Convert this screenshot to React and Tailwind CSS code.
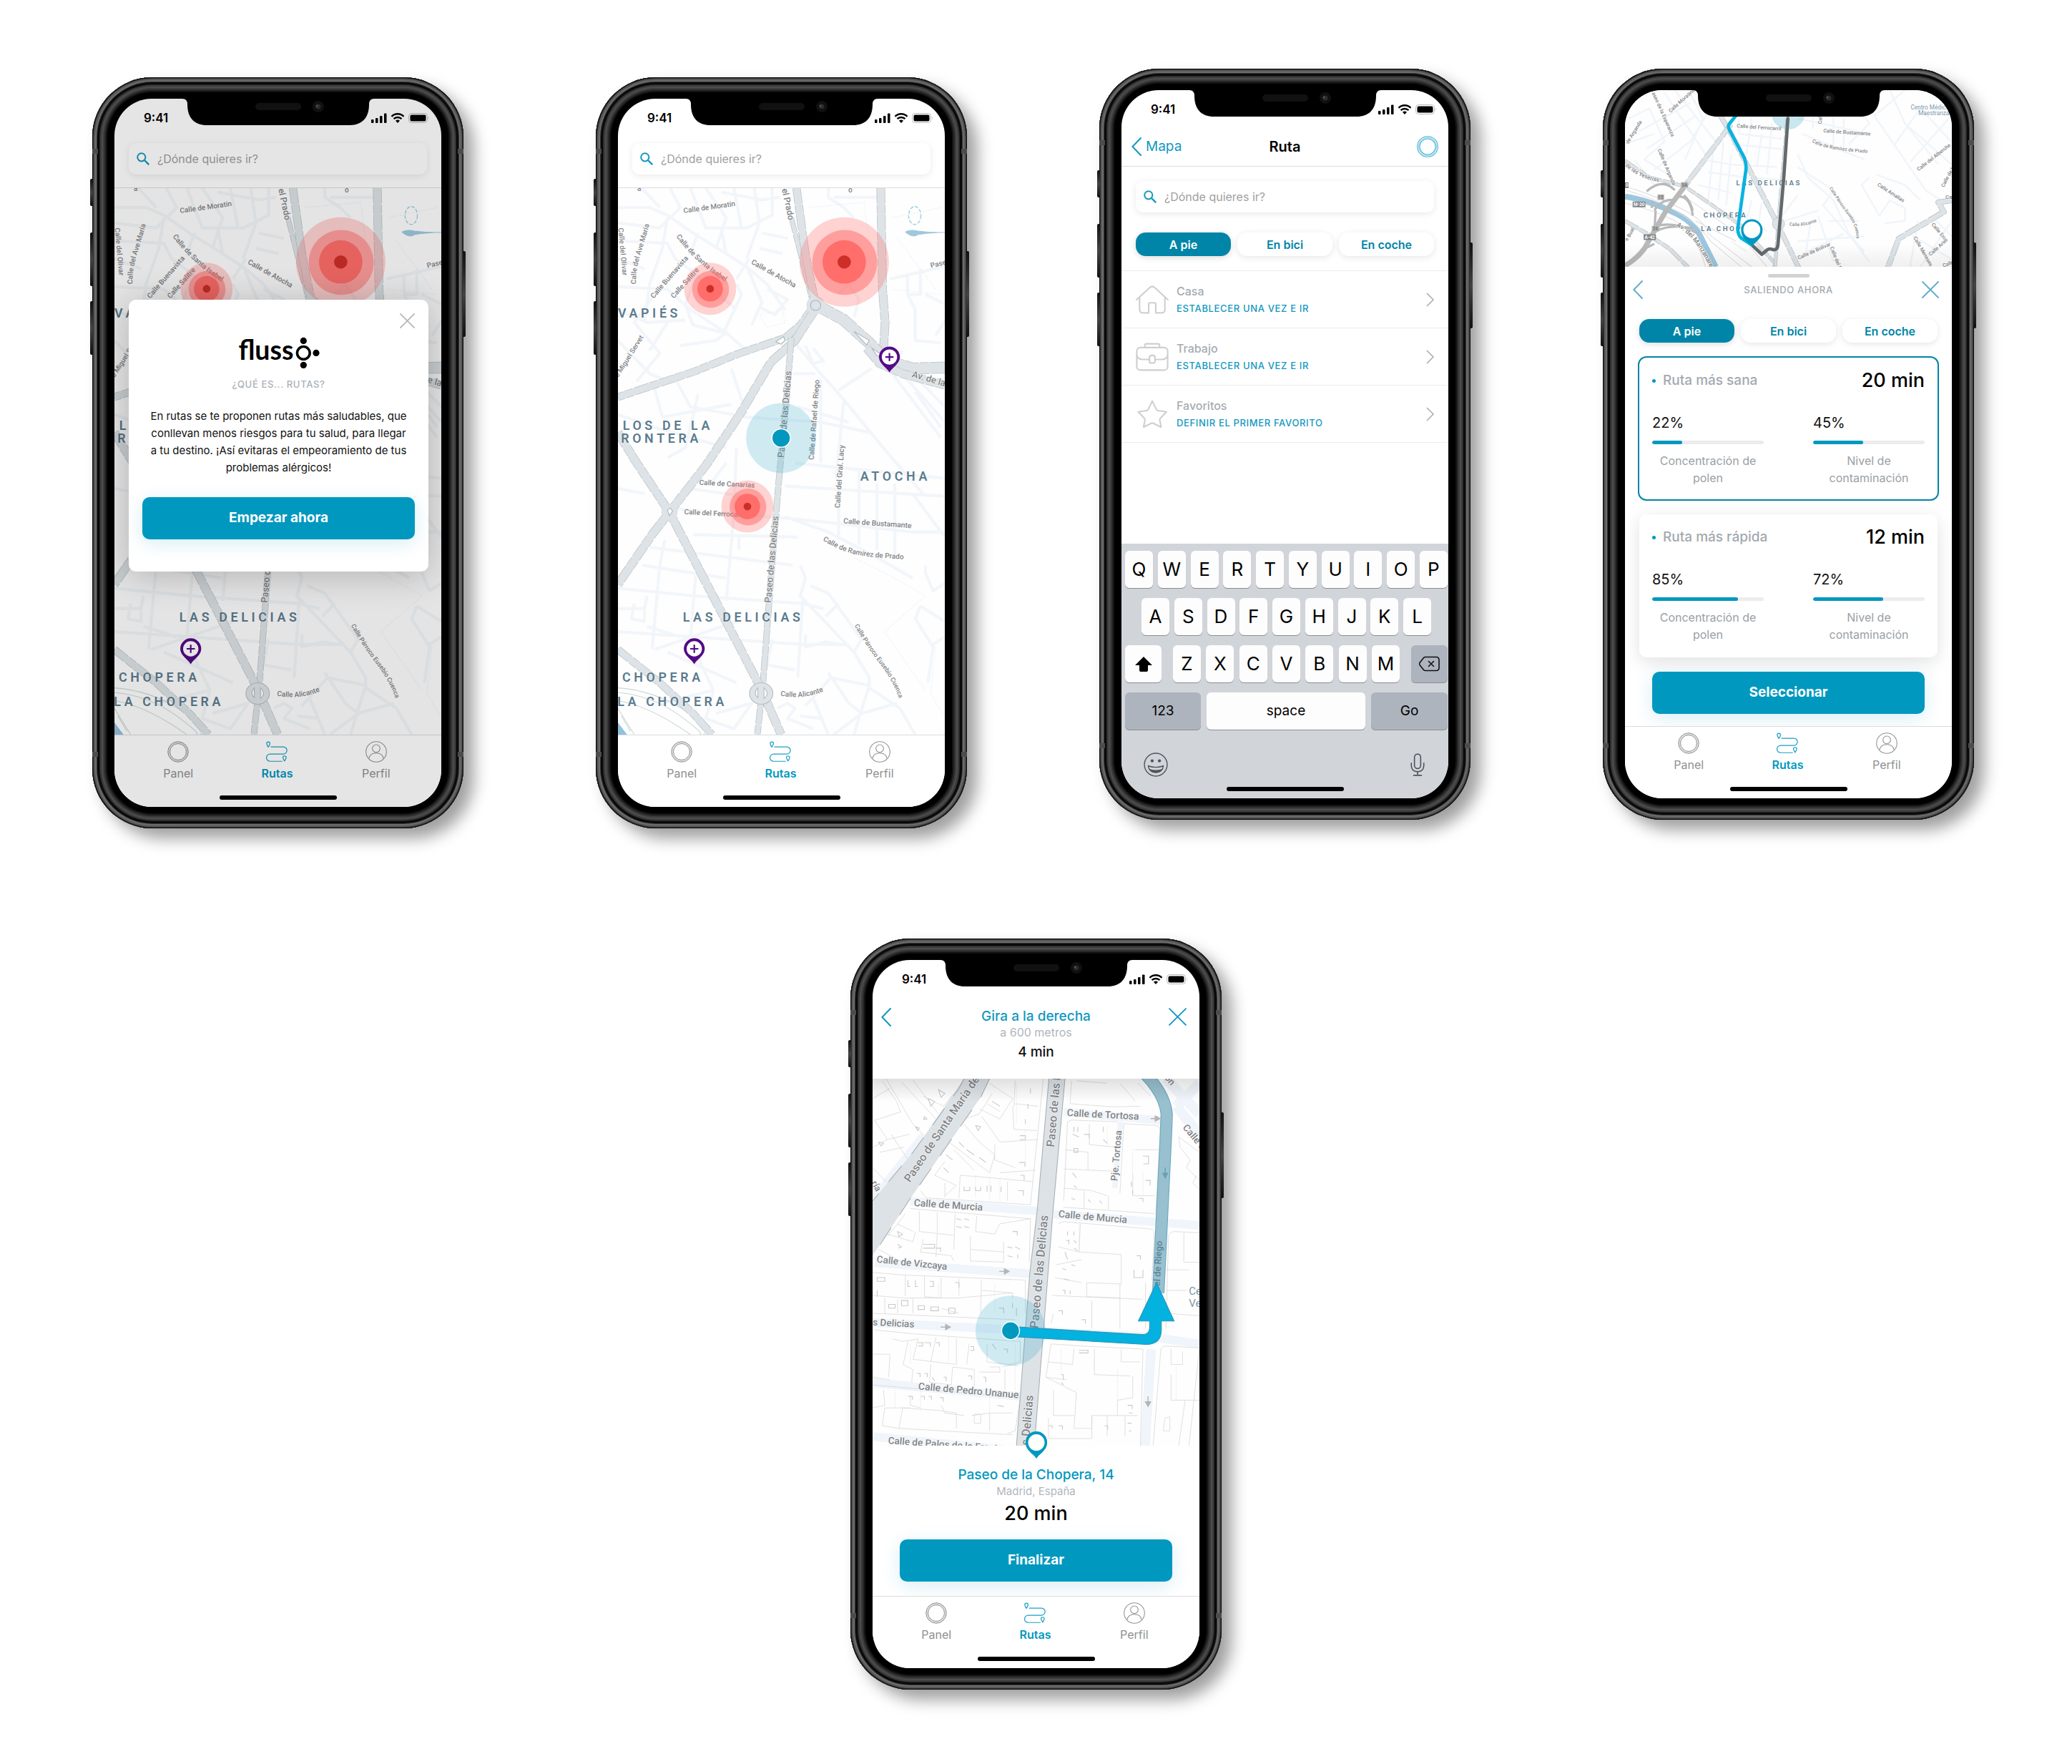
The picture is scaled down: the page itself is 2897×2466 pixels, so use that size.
import React from "react";

const PEDESTRIAN_MODES = ["A pie", "En bici", "En coche"];

/* ---------- icons ---------- */

function SearchIcon() {
  return (
    <svg viewBox="0 0 18 18" className="h-[18px] w-[18px] shrink-0" fill="none" stroke="#1398bf" strokeWidth="2">
      <circle cx="6.8" cy="6.8" r="5.6" />
      <path d="M11 11l6.2 6.2" strokeWidth="2.4" />
    </svg>
  );
}

function BackChevron() {
  return (
    <svg viewBox="0 0 14 26" className="h-[26px] w-[14px]" fill="none" stroke="currentColor" strokeWidth="2" strokeLinecap="round">
      <path d="M13 1L1.4 13L13 25" />
    </svg>
  );
}

function CloseIcon({ className = "" }) {
  return (
    <svg viewBox="0 0 24 24" className={className} fill="none" stroke="currentColor" strokeWidth="1.8" strokeLinecap="round">
      <path d="M1 1l22 22M23 1L1 23" />
    </svg>
  );
}

function RingIcon({ blue }) {
  return blue ? (
    <svg viewBox="0 0 84 84" className="h-[30px] w-[30px]" fill="none" stroke="#3db0d2" strokeWidth="3">
      <circle cx="42" cy="42" r="40" />
      <circle cx="42" cy="42" r="35.5" stroke="#7fcbe1" strokeWidth="2.5" />
      <circle cx="42" cy="42" r="31" />
    </svg>
  ) : (
    <svg viewBox="0 0 84 84" className="h-[30px] w-[30px]" fill="none" stroke="#959595" strokeWidth="2.8">
      <circle cx="42" cy="42" r="36" stroke="#dcdcdc" strokeWidth="7" />
      <circle cx="42" cy="42" r="40" />
      <circle cx="42" cy="42" r="32" />
    </svg>
  );
}

function RouteIcon() {
  return (
    <svg viewBox="0 0 86 84" className="h-[30px] w-[30px]" fill="none" stroke="#1a9fc4" strokeWidth="3.5" strokeLinecap="round" strokeLinejoin="round">
      <path d="M20 22H69a14.5 14.5 0 0 1 0 29H16a14 14 0 0 0 0 29H64" />
      <path d="M9 23C5 17 2.500 13 2.500 9a6.500 6.500 0 0 1 13 0C15.500 13 13 17 9 23z" />
      <path d="M74 79C70 73 67.500 69 67.500 65a6.500 6.500 0 0 1 13 0C80.500 69 78 73 74 79z" />
    </svg>
  );
}

function ProfileIcon() {
  return (
    <svg viewBox="0 0 84 84" className="h-[30px] w-[30px]" fill="none" stroke="#949494" strokeWidth="3">
      <circle cx="42" cy="42" r="40" />
      <circle cx="42" cy="29" r="15" />
      <path d="M13 69C16 55 27 47 42 47S68 55 71 69" />
    </svg>
  );
}

function RowIcon({ kind }) {
  return (
    <svg viewBox="0 0 130 112" className="h-[40px] w-[46px]" fill="none" stroke="#cfcfcf" strokeWidth="6" strokeLinecap="round" strokeLinejoin="round">
      {kind === "home" && (
        <path d="M3 56L56 7q9-6 18 0L127 56M15 46V94q0 14 14 14H51V74q0-6 6-6H73q6 0 6 6V108H101q14 0 14-14V46" />
      )}
      {kind === "work" && (
        <>
          <rect x="4" y="19" width="122" height="89" rx="14" />
          <path d="M36 18V10q0-6 6-6H88q6 0 6 6V18M4 50Q8 66 28 66H53M77 66H102Q122 66 126 50" />
          <rect x="54" y="50" width="22" height="30" rx="8" />
        </>
      )}
      {kind === "star" && (
        <path d="M65 4L82 38Q84 42 88 42L121 47L97 72Q94 75 95 80L100 107L69 92Q65 90 61 92L31 107L36 80Q37 75 34 72L10 47L43 42Q47 42 49 38Z" />
      )}
    </svg>
  );
}

function FlussoLogo() {
  return (
    <svg viewBox="0 0 320 130" className="h-[46px] w-[114px]" role="img" aria-label="flusso">
      <text x="0" y="97" fontSize="106" fontWeight="700" fontFamily="Lato, sans-serif" fill="#000">fluss</text>
      <circle cx="257" cy="69" r="25" fill="none" stroke="#000" strokeWidth="10" />
      <circle cx="257" cy="21" r="13" />
      <circle cx="307" cy="69" r="13" />
      <circle cx="257" cy="117" r="13" />
    </svg>
  );
}

/* ---------- map drawing helpers ---------- */

const MAP_FONT = 'Roboto, "Noto Sans", sans-serif';

function Road({ d, w, fill = "#dde3e6", edge = "#b8c1c6" }) {
  return (
    <g fill="none" strokeLinejoin="round">
      <path d={d} stroke={edge} strokeWidth={w} strokeDasharray="60 6 34 4" />
      <path d={d} stroke={fill} strokeWidth={w - 4} />
    </g>
  );
}

function Street({ x, y, r = 0, s = 28, c = "#7f8386", children }) {
  return (
    <text
      transform={`translate(${x} ${y}) rotate(${r})`}
      fontSize={s}
      fontWeight="500"
      fill={c}
      stroke="#fff"
      strokeWidth="3"
      paintOrder="stroke"
    >
      {children}
    </text>
  );
}

function CurvedStreet({ id, d, s = 28, children }) {
  return (
    <>
      <path id={id} d={d} fill="none" />
      <text fontSize={s} fontWeight="500" fill="#7f8386" stroke="#fff" strokeWidth="3" paintOrder="stroke">
        <textPath href={`#${id}`}>{children}</textPath>
      </text>
    </>
  );
}

function District({ x, y, s = 50, gap = 13, children }) {
  return (
    <text x={x} y={y} fontSize={s} fontWeight="600" letterSpacing={gap} fill="#5b7b8e" stroke="#fff" strokeOpacity="0.6" strokeWidth="4" paintOrder="stroke">
      {children}
    </text>
  );
}

function Heat({ x, y, r }) {
  return (
    <g>
      <circle cx={x} cy={y} r={r[0]} fill="#ff6b68" fillOpacity="0.29" />
      <circle cx={x + 2} cy={y + 2} r={r[1]} fill="#ff6b68" fillOpacity="0.5" />
      <circle cx={x} cy={y} r={r[2]} fill="#ff6b66" fillOpacity="0.93" />
      <circle cx={x} cy={y} r={r[3]} fill="#cd2f28" />
    </g>
  );
}

function UserDot({ x, y }) {
  return (
    <g>
      <circle cx={x} cy={y} r="137" fill="#27a2c4" fillOpacity="0.21" />
      <circle cx={x} cy={y} r="36" fill="#0098bf" stroke="#fff" strokeWidth="4" />
    </g>
  );
}

function ClinicPin({ x, y }) {
  return (
    <g transform={`translate(${x} ${y})`}>
      <path d="M0 60C-12 40-41 26-41 0A41 41 0 0 1 41 0C41 26 12 40 0 60z" fill="#540a86" />
      <circle r="30" fill="#fff" />
      <path d="M-16 0H16M0-16V16" stroke="#540a86" strokeWidth="6" />
    </g>
  );
}

/* ---------- city map (screens 1 and 2) ---------- */

function CityMap({ id }) {
  return (
    <svg viewBox="136 484 1280 2139" preserveAspectRatio="xMidYMid slice" className="block h-full w-full" fontFamily={MAP_FONT} role="img" aria-label="Mapa de Madrid">
      <rect x="100" y="460" width="1360" height="2200" fill="#fefefe" />
      <g fill="none" stroke="#f2f6fa" strokeWidth="12" strokeLinejoin="round">
        <path d="M136 560H260L330 590L430 660L560 740L650 800L720 860L790 960M136 620L300 640L380 560L340 484M230 484L300 560M420 484L480 640L640 640L740 590V484" />
        <path d="M480 484L560 600L520 720M540 500L700 530L770 520M590 484L620 640M670 484L690 620L640 760M136 690L330 700L360 760L440 820L600 960M330 600L310 720L260 860L240 1010" />
        <path d="M136 760L240 800M136 870L330 880L420 960L560 1050L640 1120M280 900L200 1010L300 1130L210 1240M136 960L250 1010L400 1000M330 1010L260 1120M440 830L400 940L430 1020L550 1050L620 900L600 860" />
        <path d="M136 1080L260 1210L330 1240M560 1050L520 1080L380 1100M640 790L700 930L660 1020M690 720L780 740M650 760L600 840M700 660L800 680M450 660L420 740L500 800M560 740L540 640M720 880L800 920L750 980L690 950" />
        <path d="M960 484V520L1020 560L1060 600M980 520H1150M1200 840L1420 790M1270 820V900H1320V800M1000 900L1040 860L1080 920L1060 990M1250 1120L1210 1200M1270 900L1300 960V1080L1400 1090M1340 900L1420 940M1380 1060L1420 1000" />
        <path d="M360 1230L420 1340L640 1380L930 1400L1120 1440M280 1270L310 1380L580 1330M136 1370L280 1420L560 1500M580 1190L640 1370M450 1290L400 1500L330 1540M830 1090L930 1210L1010 1300L1200 1530L1330 1680M870 1100L900 1170L940 1160L900 1110M1000 1275L1130 1190M820 1210H910M1020 1320L990 1620M930 1230V1560M840 1340L1040 1400" />
        <path d="M1210 1210L1400 1460M1240 1200L1416 1400M1280 1200L1416 1340M1300 1280L1400 1420" />
        <path d="M136 1660L240 1680M560 1560L500 1640L420 1620M600 1500L590 1760L560 2100M420 1660L700 1700M370 1740L840 1780L930 1790L1290 1830L1416 1830M790 1650L1416 1690M830 1560L1416 1620M1000 1600V1860M1080 1580V1880M1150 1640V1900M1220 1640V1930M790 1770L960 1830L1150 1930L1290 2010M1290 1680L1416 1850" />
        <path d="M430 1840L840 1850M610 1840V1900M320 1860L300 1960L270 2290M260 1890L580 1930L820 1960M136 2050L440 2080L860 2110L940 2130M440 2000L420 2250M230 1960L560 2010M136 2130H240L250 2080M200 2110L190 2170L240 2180V2120M136 2220L860 2270L1030 2270M250 2200L380 2240M280 2290L600 2180M850 1960L870 2010L850 2080L1060 2300L1120 2400V2440L1240 2520L1300 2623" />
        <path d="M890 2040L960 2070L1090 2250L1060 2300M1000 2110L950 2160M860 2090L840 2400M740 2250L720 2350L830 2370M870 2230V2280L950 2260L1010 2270M870 2510L970 2400L1120 2430L1060 2623M960 2380L1040 2500L1090 2540L980 2623M760 2520L800 2500L830 2520L800 2560L900 2600M900 2480L960 2623M1090 2540L1230 2500M510 2450L480 2560L590 2600L660 2500L520 2540M440 2300L510 2450L300 2500M330 2300L600 2420M850 2550L940 2560" />
        <path d="M1320 2120L1416 2180M1320 2120L1300 2170L1370 2280L1350 2420M1340 1960V1990L1370 2060L1416 2030M1370 2270L1416 2240" />
      </g>
      <g fill="none" stroke="#e9f0f6" strokeWidth="3" strokeDasharray="6 5">
        <path d="M1060 1930L1200 2000L1340 2080L1180 2220L1340 2450M1380 2280L1360 2460L1416 2560M880 560L1100 540L1120 700L1200 690M1210 600L1400 560M1230 680L1380 880M1210 880L1400 900M690 980L780 960L790 1010L720 1030z" />
      </g>
      <g fill="none" stroke="#c9d8d6" strokeWidth="3">
        <path d="M136 2440Q280 2450 400 2530T470 2623M136 2458Q270 2470 380 2550T450 2623M136 2490Q260 2510 420 2623M136 2520L200 2623M150 2550L185 2610" />
      </g>
      <path d="M136 2575L172 2623H136z" fill="#92c1dc" />
      <ellipse cx="1298" cy="591" rx="24" ry="35" fill="none" stroke="#a5cde0" strokeWidth="4" strokeDasharray="14 6" />
      <path d="M1262 656Q1280 645 1310 652Q1370 660 1416 657Q1340 660 1310 666Q1290 680 1262 656z" fill="#9ec8de" stroke="#9ec8de" strokeWidth="3" />

      <Road d="M815 600L850 740L895 920" w={20} />
      <Road d="M835 484L870 740L910 940" w={32} />
      <Road d="M1165 484L1172 880L1182 1010L1176 1110" w={34} />
      <Road d="M900 950L850 1020L790 1070L600 1135L440 1200L136 1302" w={30} />
      <Road d="M908 960L830 1080L735 1165L610 1375L480 1570L340 1750L270 1840L136 2035" w={34} />
      <Road d="M815 1070L795 1320L765 1640L735 2010L704 2420L682 2623" w={25} />
      <Road d="M136 1440L200 1545L338 1752L430 1930L695 2440L775 2623" w={34} />
      <Road d="M136 2290L300 2420L430 2540L505 2623" w={30} />
      <Road d="M920 945L1020 1000L1120 1090L1190 1160L1290 1190L1416 1186" w={46} />
      <Road d="M1110 1110L1160 1170L1250 1210L1416 1255" w={34} />
      <circle cx="910" cy="943" r="36" fill="#dde3e6" />
      <circle cx="910" cy="943" r="20" fill="none" stroke="#a9b4ba" strokeWidth="3" />
      <path d="M1060 1045L1120 1080L1110 1098zM1130 1110L1160 1130L1190 1150L1150 1140zM755 1085L785 1065L790 1080L775 1095z" fill="#fff" stroke="#a9b4ba" strokeWidth="3" />
      <circle cx="338" cy="1752" r="32" fill="#dde3e6" />
      <path d="M330 1745L342 1736L350 1748L338 1766z" fill="#fff" stroke="#a9b4ba" strokeWidth="3" />
      <ellipse cx="697" cy="2462" rx="46" ry="42" fill="#dde3e6" stroke="#b3bdc3" strokeWidth="3" />
      <path d="M684 2440Q664 2462 684 2478zM708 2440Q732 2462 708 2482z" fill="#fff" stroke="#b3bdc3" strokeWidth="3" />

      <Street x={212} y={496}>a</Street>
      <Street x={1038} y={500}>o</Street>
      <Street x={394} y={582} r={-8}>Calle de Moratín</Street>
      <CurvedStreet id={`${id}-ave`} d="M207 860Q206 800 226 738T266 600">Calle del Ave María</CurvedStreet>
      <Street x={138} y={640} r={85}>Calle del Olivar</Street>
      <Street x={276} y={917} r={-49}>Calle Buenavista</Street>
      <Street x={355} y={917} r={-48}>Calle Salitre</Street>
      <CurvedStreet id={`${id}-isabel`} d="M364 674Q450 790 590 872">Calle de Santa Isabel</CurvedStreet>
      <Street x={656} y={779} r={29}>Calle de Atocha</Street>
      <Street x={778} y={488} r={78} s={34}>el Prado</Street>
      <Street x={1362} y={797} r={-14}>Paseo</Street>
      <District x={136} y={992}>VAPIÉS</District>
      <Street x={138} y={1226} r={-58} s={27}>e Miguel Servet</Street>
      <District x={155} y={1430}>LOS DE LA</District>
      <District x={148} y={1481}>RONTERA</District>
      <Street x={786} y={1540} r={-85} s={36}>Paseo de las Delicias</Street>
      <Street x={903} y={1548} r={-86} s={29}>Calle de Rafael de Riego</Street>
      <Street x={1005} y={1736} r={-86} s={29}>Calle del Gral. Lacy</Street>
      <Street x={1285} y={1223} r={16} s={36}>Av. de la</Street>
      <Street x={454} y={1645} r={3}>Calle de Canarias</Street>
      <Street x={395} y={1760} r={3}>Calle del Ferrocarril</Street>
      <Street x={735} y={2108} r={-85} s={36}>Paseo de las Delicias</Street>
      <District x={1085} y={1628}>ATOCHA</District>
      <Street x={1018} y={1796} r={4} s={29}>Calle de Bustamante</Street>
      <CurvedStreet id={`${id}-ramirez`} d="M938 1862Q1020 1915 1110 1925T1300 1938">Calle de Ramírez de Prado</CurvedStreet>
      <District x={390} y={2182}>LAS DELICIAS</District>
      <District x={153} y={2415}>CHOPERA</District>
      <District x={134} y={2511}>LA CHOPERA</District>
      <CurvedStreet id={`${id}-parroco`} d="M1062 2196Q1110 2280 1165 2350T1246 2510" s={25}>Calle Párroco Eusebio Cuenca</CurvedStreet>
      <CurvedStreet id={`${id}-alicante`} d="M772 2470Q880 2490 965 2440">Calle Alicante</CurvedStreet>

      <Heat x={1022} y={773} r={[175, 127, 85, 26]} />
      <Heat x={497} y={878} r={[102, 72, 50, 15]} />
      <Heat x={643} y={1730} r={[102, 72, 50, 15]} />
      <UserDot x={775} y={1462} />
      <ClinicPin x={1199} y={1145} />
      <ClinicPin x={435} y={2287} />
    </svg>
  );
}

/* ---------- route overview map (screen 4) ---------- */

function Badge({ x, y, w, children, dark }) {
  return (
    <g>
      <rect x={x} y={y} width={w} height="22" fill={dark ? "#808486" : "#b4b4b4"} />
      <text x={x + w / 2} y={y + 18} fontSize="18" fontWeight="700" textAnchor="middle" fill={dark ? "#fff" : "#777"}>{children}</text>
    </g>
  );
}

function OverviewMap() {
  return (
    <svg viewBox="145 129 1278 691" preserveAspectRatio="xMidYMid slice" className="block h-full w-full" fontFamily={MAP_FONT} role="img" aria-label="Mapa de las rutas">
      <defs>
        <linearGradient id="ov-fade" x1="0" y1="0" x2="0" y2="1">
          <stop offset="0" stopColor="#000" stopOpacity="0" />
          <stop offset="1" stopColor="#000" stopOpacity="0.06" />
        </linearGradient>
      </defs>
      <rect x="100" y="100" width="1400" height="760" fill="#fefefe" />
      <g fill="none" stroke="#f0f5fa" strokeWidth="7" strokeLinejoin="round">
        <path d="M160 240L240 200L300 330L220 400L330 470M200 290L400 180M230 360L420 230M300 140L460 380M340 129L500 330M400 140L450 240L380 400M260 440L400 330L480 200L440 129M145 340L260 300M180 400L260 500" />
        <path d="M450 400L560 420L740 430M470 450L620 470L760 480M430 500L560 530M530 330L510 560M490 360L470 560M560 380L540 580M590 240V300L760 320M640 240L620 380M680 300L660 430M720 260L700 460M560 340L760 360M840 300L980 360L1080 400M820 240L1100 300M880 200V280M960 160V350M1000 240V360M1060 200L1100 260L1020 340M820 380L860 470L960 560L1020 690L1080 760" />
        <path d="M820 430L960 520L920 580L1040 720L1100 800M820 540L760 620M770 640L900 600M870 650L850 780M900 620L960 800M1000 690L860 760M1080 700L820 720M940 640L1060 640M1080 129L1120 230L1320 520M1180 129L1240 260L1370 420M1120 230L1240 129M1200 340L1300 200L1420 330M1260 410L1420 230M1240 260L1423 420M1100 470L1070 500L1140 620L1180 560L1240 590V640L1160 650M1300 560L1240 500L1130 460M1320 520L1380 560M1240 680L1420 790M1290 640L1260 820M1340 620L1423 700M1300 820L1423 640M640 560L620 640M680 570L660 700M700 680L600 600M560 720L620 760" />
      </g>
      <path d="M145 545Q240 560 330 605Q410 640 440 700L500 820" fill="none" stroke="#9cc6dd" strokeWidth="22" />
      <g fill="none" stroke="#dedede" strokeWidth="3">
        <path d="M145 505Q260 540 360 590T470 690L640 820M145 520Q260 550 350 605T480 720L600 820M145 570Q260 600 340 640T460 820M400 560L600 700L700 820M420 640L580 720" />
      </g>
      <Road d="M515 225L560 300L740 650L825 825" w={20} />
      <Road d="M560 262L378 505" w={20} />
      <Road d="M145 405L240 470L378 505L480 575L600 660L730 805V825" w={14} />
      <Road d="M780 240L745 640L732 825" w={14} />
      <Road d="M145 640L230 690L320 750L395 825" w={16} />
      <Road d="M1423 560L1370 568L1392 605L1215 710L1172 825" w={22} />
      <circle cx="745" cy="652" r="24" fill="#dde3e6" stroke="#b3bdc3" strokeWidth="2" />
      <g fill="none" stroke="#b9b9b9">
        <path d="M375 510L300 610L220 750Q190 790 145 815" strokeWidth="20" />
        <path d="M350 545Q400 540 410 620M375 540Q400 560 410 600M345 560Q290 550 260 600M265 600L260 680M270 660Q340 640 430 690M265 680Q330 650 410 670M230 525Q290 470 340 520M250 560V590M220 750L260 730" strokeWidth="9" />
      </g>
      <Street x={250} y={140} r={66} s={20}>aseo de la Esperanza</Street>
      <Street x={323} y={218} r={-42} s={20}>Calle Moratines</Street>
      <Street x={158} y={340} r={-58} s={20}>de Arganda</Street>
      <Street x={272} y={362} r={67} s={20}>Calle de Arganda</Street>
      <CurvedStreet id="ov-tes" d="M145 425Q200 475 280 488" s={22}>de las Yeserías</CurvedStreet>
      <Street x={582} y={275} r={4} s={20}>Calle del Ferrocarril</Street>
      <Street x={914} y={262} r={-88} s={20}>Calle</Street>
      <Street x={920} y={294} r={4} s={20}>Calle de Bustamante</Street>
      <CurvedStreet id="ov-ram" d="M876 332Q930 365 1090 374" s={19}>Calle de Ramírez de Prado</CurvedStreet>
      <Street x={1293} y={446} r={-38} s={20}>Calle del Alberche</Street>
      <Street x={1130} y={502} r={33} s={20}>Calle Amalias</Street>
      <CurvedStreet id="ov-par" d="M944 512Q980 570 1015 615T1050 710" s={17}>Calle Párroco Eusebio Cuenca</CurvedStreet>
      <CurvedStreet id="ov-ali" d="M787 658Q850 668 910 636" s={18}>Calle Alicante</CurvedStreet>
      <Street x={824} y={792} r={-24} s={20}>Calle de Bolívar</Street>
      <Street x={946} y={744} r={68} s={20}>Calle del Plomo</Street>
      <Street x={1342} y={655} r={50} s={20}>Calle Eros</Street>
      <Street x={1272} y={706} r={60} s={20}>Calle Meneses</Street>
      <Street x={1340} y={778} r={-42} s={20}>Calle Ariel</Street>
      <Street x={1392} y={510} r={-62} s={20}>Calle de la</Street>
      <Street x={1398} y={555} s={22}>Ca</Street>
      <Street x={1390} y={822} r={-20} s={20}>Calle</Street>
      <Street x={155} y={720} r={-60} s={20}>e Bual</Street>
      <CurvedStreet id="ov-manz" d="M345 660Q420 700 480 830" s={26}>Av. del Manzanares</CurvedStreet>
      <District x={580} y={502} s={27} gap={7}>LAS DELICIAS</District>
      <District x={452} y={628} s={27} gap={7}>CHOPERA</District>
      <District x={442} y={680} s={27} gap={7}>LA CHOPERA</District>
      <text x="1262" y="205" fontSize="23" fill="#7b9ab0">Centro Médico</text>
      <text x="1292" y="228" fontSize="23" fill="#7b9ab0">Maestranza</text>
      <Badge x={175} y={565} w={50} dark>M-30</Badge>
      <Badge x={218} y={693} w={48} dark>A-42</Badge>
      <Badge x={145} y={490} w={14} dark>0</Badge>
      <Badge x={250} y={660} w={28}>26</Badge>
      <Badge x={272} y={537} w={26}>15</Badge>
      <Badge x={364} y={489} w={28}>3A</Badge>
      <circle cx="783" cy="217" r="66" fill="#27a2c4" fillOpacity="0.25" />
      <g fill="none" strokeLinejoin="round" strokeLinecap="round">
        <path d="M782 240L766 470L743 735Q740 758 722 752Q706 746 696 758L680 771L645 738" stroke="#64696c" strokeWidth="13" />
        <path d="M582 225L552 262Q547 272 552 282L612 395Q620 415 618 440L586 670Q586 695 600 708L640 733" stroke="#06b3e0" strokeWidth="13" />
      </g>
      <path d="M641 742C632 724 599 712 599 676A42 42 0 0 1 683 676C683 712 650 724 641 742z" fill="#0098bf" />
      <circle cx="641" cy="675" r="33" fill="#fff" />
      <rect x="100" y="730" width="1400" height="92" fill="url(#ov-fade)" />
    </svg>
  );
}

/* ---------- turn by turn map (screen 5) ---------- */

function TurnMap() {
  return (
    <svg viewBox="142 582 1279 1436" preserveAspectRatio="xMidYMid slice" className="block h-full w-full" fontFamily={MAP_FONT} role="img" aria-label="Mapa de navegación">
      <defs>
        <linearGradient id="turn-fade" x1="0" y1="0" x2="0" y2="1">
          <stop offset="0" stopColor="#000" stopOpacity="0.12" />
          <stop offset="1" stopColor="#000" stopOpacity="0" />
        </linearGradient>
      </defs>
      <rect x="100" y="550" width="1360" height="1500" fill="#fefefe" />
      <g fill="none" stroke="#f0f5fb">
        <path d="M290 1062L790 1100M850 1112L1421 1156M150 1302L760 1345M142 1536L1230 1592L1421 1620M142 1772L720 1825" strokeWidth="34" />
        <path d="M142 1982L720 2040" strokeWidth="34" />
        <path d="M890 712L1275 746" strokeWidth="32" />
        <path d="M1112 750L1090 1010" strokeWidth="22" />
        <path d="M1232 1640L1208 2018" strokeWidth="38" />
        <path d="M1290 582L1421 720M1421 600L1330 690M1330 690L1421 800" strokeWidth="40" />
        <path d="M142 1050L340 800" strokeWidth="24" />
      </g>
      <g fill="none" stroke="#d3d3d3" strokeWidth="2">
        <path d="M180 590L235 670L252 712L150 745M195 582L300 760L340 800M255 595L390 740M300 588L400 720M142 660L210 620M150 745L200 820L142 850M200 820L285 800M142 930L215 1005L285 905L215 800M170 870L265 850M340 650L420 690L460 640" />
        <path d="M610 640L560 720L500 740M600 600L690 660L640 740L560 700M590 680L640 710M570 730L640 830L790 820M690 690L695 780L785 785M500 760L560 830L620 880L600 950L520 890L440 830M460 860L540 940M620 840V900L700 930M425 905L385 960L470 1000L425 1040M330 1020L350 1048L760 1075M425 990V1045M485 960L480 1050M485 960L610 970L770 985M670 985V1060" />
        <path d="M700 590L695 690M810 582L760 1075M700 680L790 690M640 950L780 940" />
        <path d="M920 590L915 680L1080 692L1190 690M940 590L1060 600M1110 600L1170 670M1180 600L1230 650M905 750L890 1060M905 750Q920 740 940 745L1100 750M990 760V840L1100 850M1125 760L1110 1030M1125 758L1250 765Q1270 770 1268 790L1250 1110M895 860L985 870V940M890 935L1100 945M890 1010L1000 1020L1060 1040M1170 860H1260M1160 950V1040H1245M970 1020V1090M1065 1040V1095M890 1085L1245 1110" />
        <path d="M290 1090L760 1130L755 1300M325 1100L325 1180L460 1195M395 1105V1185M465 1110L460 1250M550 1120L545 1180L620 1190L640 1150L760 1130M525 1195V1250L655 1260M340 1210L330 1260L450 1275L460 1295M655 1220V1300M200 1190L300 1220L310 1180M165 1250L260 1300M525 1250V1295L655 1300M270 1110L240 1150L300 1180M395 1190L390 1280M240 1150L200 1200" />
        <path d="M142 1340L260 1350L740 1370V1500M270 1350V1430M345 1355V1435L410 1440V1360M480 1365V1430M568 1370L565 1500M142 1430L265 1440L480 1440L690 1420M190 1440V1500M240 1445V1500M300 1440V1500M570 1410L690 1420V1440M142 1500L700 1525M410 1480L480 1500" />
        <path d="M870 1150Q880 1140 900 1142L1230 1170Q1246 1175 1244 1190L1235 1370M955 1150L950 1260L1115 1270V1390M870 1240L950 1260M860 1310L960 1290M855 1360L960 1380M980 1380L1110 1385V1440L980 1435zM845 1430L955 1435L1200 1445M850 1500L840 1540M1000 1450V1560M1110 1440V1560M1210 1380V1560" />
        <path d="M1340 810L1421 870M1340 810L1345 850L1385 900L1370 930L1421 980M1410 960L1395 990L1421 1015M1300 1200Q1305 1180 1325 1180L1421 1185M1300 1200L1290 1560M1360 1185V1300H1421M1290 1330H1380M1290 1410H1370M1300 1500L1421 1510" />
        <path d="M150 1565L300 1580L720 1610V1690L650 1710M220 1600L260 1610L320 1600L300 1680L470 1700V1600M142 1660H210L205 1750M280 1610L262 1700L300 1720L295 1770M390 1595L370 1690M520 1620L510 1700M590 1620V1690L710 1705M600 1710H640V1730H560M370 1700L365 1770L450 1780L455 1710L540 1720V1790M660 1720V1800M142 1750L210 1760" />
        <path d="M142 1780L720 1830L700 1960L670 1970M185 1800L190 1860L142 1870M190 1870L180 1940L245 1950L260 1870L400 1880L470 1890V1950M290 1820V1860L330 1870M410 1860L425 1890L500 1900M245 1950L500 1965L690 1975M530 1900L600 1890L690 1890M600 1890V1960M540 1895H565V1930H540zM190 1870L290 1870" />
        <path d="M840 1620L1000 1630L1200 1640L1190 2018M840 1620L820 1750L940 1810L930 1950M930 1640L925 1700L830 1690M1010 1640V1740L1150 1745M1115 1640V1690H1190M820 1750L900 1760M1160 1745V1830L1100 1840V1900L1000 1900V1950L930 1950M850 1800V1900H930M830 1910V1990H1000V1900M1100 1900H1180M1060 1900V1980M1130 1900V1980" />
        <path d="M1270 1640Q1275 1628 1290 1628L1421 1635M1270 1640L1240 2018M1310 1640V1700H1355V1650M1310 1740V1840H1365L1340 2018M1421 1640L1380 2018M1285 1910L1305 1905V1960L1280 1960zM1365 1840H1421" />
      </g>
      <g fill="none" stroke="#c9c9c9" strokeWidth="3">
        <path d="M500 1005V1020H522V1005M545 1005V1020H565V1005M590 1000V1025M605 1000V1025M645 1005V1025M712 1020H732V1040M718 805H740V820H718M715 910H738V925M720 960H735V980M740 740V760M750 680V700M760 620V640M430 880L455 900M420 930L440 950M165 830L185 835L175 845L165 830M310 770L325 775L318 785zM345 730L355 740L342 742zM400 625L425 640L410 655zM360 660L385 672L370 690zM545 765L565 770L555 785L545 765M480 830L500 850M510 860L540 880M560 890L585 910M610 670L640 690" />
        <path d="M930 770V790M945 770V790M925 800L950 810M970 800H990V815M1045 770V790M1045 820L1060 835M930 855H945V870H930zM1200 885H1222V915H1202M1210 980H1228V1000M925 950L940 970M930 1000L940 1010M920 1050L935 1055M985 1055L995 1065M1030 1060L1040 1070M1185 1050H1200V1065M1155 985V1005M1160 1020V1035" />
        <path d="M470 1130L490 1135M500 1130L520 1135M470 1160L490 1165M500 1160L520 1165M690 1180H708V1195M240 1180L260 1190L245 1200zM340 1230H385V1245H340M390 1245H408V1260M240 1230L255 1240L242 1245M670 1240L690 1245M700 1240L720 1250M670 1275L690 1280M710 1270V1285M905 1180V1195M930 1180V1195M900 1215H910V1230M930 1215L940 1225M895 1260L905 1290M930 1245L945 1255M885 1325L900 1330M920 1310L935 1315M890 1365L910 1370M1165 1330V1360H1200V1330M1175 1275H1190V1290" />
        <path d="M160 1360H190V1375H160zM280 1370V1395H290M310 1370V1395H320M365 1375H380V1395H365M465 1380H480V1400M160 1410V1435M205 1465H230V1480H205zM255 1450H280V1470H255zM320 1470H345V1485H320zM370 1475H400V1490H370zM440 1480H465V1500H440zM635 1480H655V1500M690 1460V1480M705 1480V1510M885 1410H895V1425M915 1410V1425M870 1490H885V1505M960 1525H975V1540" />
        <path d="M320 1615H338V1628H320M345 1615H368V1630M390 1615H403V1630M525 1630H538V1645H525M610 1620L625 1640M655 1640H670V1655M315 1735H328V1750M345 1735H356V1750M375 1750L385 1765M420 1750H430V1765M515 1745H530V1760M575 1750H585V1770M280 1825H298V1838M330 1825H345V1838M360 1825H372V1838M405 1830H418V1845M630 1860L655 1865M950 1645H985V1655H950M880 1740H888V1760M880 1770L890 1780M832 1940H845V1950M870 1940H885V1955M1140 1860H1158V1875M1145 1890H1160M1050 1940H1062V1955M1140 1930H1155M1145 1960H1155" />
      </g>
      <g fill="none" stroke="#dcdcdc" strokeWidth="2" strokeDasharray="4 4">
        <path d="M705 600V760M740 780V930M545 960V1050M600 970V1055M640 975V1060M950 1150V1260M1060 770V850M1160 860V950M1200 950V1040M400 1380V1440M620 1390V1500M440 1590V1690M700 1620V1800M1440 1210V1400M290 1620V1700M880 1640V1740M1100 1720V1840M1330 1700V1840M230 1800V1870M330 1790V1880M600 1800V1890" />
      </g>

      <path d="M500 582H600L565 655L290 1050L142 1275V1060L300 870z" fill="#dce2e6" />
      <path d="M500 582L480 620L300 870L142 1060M600 582L565 655L290 1050L145 1272" fill="none" stroke="#a8afb3" strokeWidth="3" strokeDasharray="80 60" />
      <path d="M832 582H895L848 1100L775 2018H705L757 1345L787 1090z" fill="#dce2e6" />
      <path d="M832 582L787 1090L757 1345L705 2018M895 582L848 1100L775 2018" fill="none" stroke="#a8b0b6" strokeWidth="3" />

      <Street x={288} y={990} r={-56} s={44}>Paseo de Santa María de la</Street>
      <Street x={902} y={728} r={3} s={39}>Calle de Tortosa</Street>
      <Street x={853} y={850} r={-85} s={44}>Paseo de las Delicias</Street>
      <Street x={1100} y={983} r={-85} s={37}>Pje. Tortosa</Street>
      <Street x={303} y={1080} r={4} s={39}>Calle de Murcia</Street>
      <Street x={868} y={1124} r={5} s={39}>Calle de Murcia</Street>
      <Street x={790} y={1560} r={-85} s={47}>Paseo de las Delicias</Street>
      <Street x={157} y={1301} r={6} s={38}>Calle de Vizcaya</Street>
      <Street x={142} y={1547} r={3} s={38}>s Delicias</Street>
      <Street x={136} y={990} r={60} s={36}>ría</Street>
      <Street x={320} y={1798} r={5} s={39}>Calle de Pedro Unanue</Street>
      <Street x={202} y={2010} r={4} s={38}>Calle de Palos de la Frontera</Street>
      <Street x={754} y={2018} r={-85} s={46}>s Delicias</Street>
      <Street x={1283} y={580} r={48} s={36}>ón</Street>
      <Street x={1354} y={774} r={50} s={38}>Calle de</Street>
      <text x="1380" y="1427" fontSize="42" fill="#7f98a6">Centro</text>
      <text x="1380" y="1474" fontSize="42" fill="#7f98a6">Verde</text>

      <g fill="none" strokeLinejoin="round">
        <path d="M1205 560Q1285 640 1293 720L1290 800L1260 1420" stroke="#6aa8bf" strokeWidth="48" />
        <path d="M1205 560Q1285 640 1293 720L1290 800L1260 1420" stroke="#98c0cf" strokeWidth="42" />
      </g>
      <text transform="translate(1266 1395) rotate(-87)" fontSize="36" fontWeight="500" fill="#5c8797">el de Riego</text>
      <g fill="#b4b4b4" stroke="#b4b4b4" strokeWidth="4">
        <path d="M1230 738H1250M1248 728L1266 738L1248 748zM638 1336H660M658 1326L676 1336L658 1346zM408 1554H430M428 1544L446 1554L428 1564zM1220 1825V1848M1210 1846L1220 1864L1230 1846z" />
      </g>
      <path d="M1287 930V955M1278 952L1287 970L1296 952z" fill="#6b9fb2" stroke="#6b9fb2" strokeWidth="4" />

      <circle cx="682" cy="1568" r="137" fill="#27a2c4" fillOpacity="0.21" />
      <path d="M700 1553L1196 1583Q1226 1584 1226 1555V1530H1182L1253 1380L1322 1530H1272V1568Q1270 1622 1212 1622L700 1592z" fill="#03b2df" stroke="#2f94b8" strokeWidth="3" />
      <circle cx="682" cy="1568" r="35" fill="#0098bf" stroke="#fff" strokeWidth="4" />
      <rect x="100" y="582" width="1360" height="90" fill="url(#turn-fade)" />
    </svg>
  );
}

/* ---------- shared phone parts ---------- */

function StatusBar() {
  return (
    <div className="flex h-[54px] shrink-0 items-center justify-between pl-[41px] pr-4">
      <span className="text-[17px] leading-5 font-semibold text-black">9:41</span>
      <svg viewBox="0 0 82 16" className="h-4 w-[82px]">
        <rect x="0" y="10" width="3.500" height="5" rx="1" />
        <rect x="6" y="8" width="3.500" height="7" rx="1" />
        <rect x="12" y="5" width="3.500" height="10" rx="1" />
        <rect x="18" y="1.500" width="3.500" height="13.500" rx="1" />
        <g fill="none" stroke="#000" strokeWidth="2.400">
          <path d="M28.500 5.800a12 12 0 0 1 17 0" />
          <path d="M31.500 9.200a8 8 0 0 1 11 0" />
        </g>
        <path d="M34 11.800a4.600 4.600 0 0 1 6 0L37 15z" />
        <rect x="52.500" y="1.500" width="26" height="13" rx="4" fill="none" stroke="#bbb" />
        <rect x="54.500" y="3.500" width="22" height="9" rx="2" />
        <path d="M80 6v4q1.600-2 0-4z" fill="#aaa" />
      </svg>
    </div>
  );
}

function SearchField() {
  return (
    <label className="mx-5 flex h-11 items-center gap-[11px] rounded-[10px] bg-white px-[11px] shadow-[0_2px_10px_rgba(0,0,0,0.09)]">
      <SearchIcon />
      <input
        type="text"
        aria-label="Destino"
        placeholder="¿Dónde quieres ir?"
        className="min-w-0 flex-1 bg-transparent text-base text-black outline-none placeholder:text-[#a0a0a0]"
      />
    </label>
  );
}

function ModeTabs() {
  return (
    <div className="mx-5 grid grid-cols-3 gap-[9px]" role="group" aria-label="Modo de transporte">
      {PEDESTRIAN_MODES.map((mode, i) => (
        <button
          key={mode}
          type="button"
          aria-pressed={i === 0}
          className={
            i === 0
              ? "h-[33px] rounded-[14px] bg-[#0085a8] text-base font-semibold text-white shadow-[0_2px_8px_rgba(0,0,0,0.14)]"
              : "h-[33px] rounded-[14px] bg-white text-base font-semibold text-[#0085a8] shadow-[0_2px_10px_rgba(0,0,0,0.1)]"
          }
        >
          {mode}
        </button>
      ))}
    </div>
  );
}

function PrimaryButton({ children }) {
  return (
    <button type="button" className="h-[59px] w-full shrink-0 rounded-[10px] bg-[#0098bf] text-[19px] font-bold text-white shadow-[0_6px_26px_rgba(0,152,191,0.16)]">
      {children}
    </button>
  );
}

function HomeBar() {
  return <div className="mx-auto mb-[10px] h-[6px] w-[164px] rounded-full bg-black" />;
}

function BottomNav() {
  const items = [
    { label: "Panel", icon: <RingIcon /> },
    { label: "Rutas", icon: <RouteIcon />, active: true },
    { label: "Perfil", icon: <ProfileIcon /> },
  ];
  return (
    <div className="relative z-10 shrink-0 border-t border-[#dcdcdc] bg-white">
      <nav className="grid grid-cols-3 pt-2 pr-[22px] pb-[21px] pl-5">
        {items.map((it) => (
          <a key={it.label} href="#" className="flex flex-col items-center gap-[5px]" aria-current={it.active ? "page" : undefined}>
            {it.icon}
            <span className={it.active ? "text-base leading-5 font-semibold text-[#0098bf]" : "text-base leading-5 text-[#8f8f8f]"}>
              {it.label}
            </span>
          </a>
        ))}
      </nav>
      <HomeBar />
    </div>
  );
}

function Notch() {
  return (
    <svg viewBox="0 0 268 38" className="absolute top-0 left-1/2 z-30 h-[38px] w-[268px] -translate-x-1/2">
      <path d="M0 0Q7 0 7 8C7 28 18 37 34 37H234C250 37 261 28 261 8Q261 0 268 0z" />
      <rect x="102" y="6" width="64" height="10" rx="5" fill="#111" />
      <circle cx="190" cy="11" r="8" fill="#101010" />
      <circle cx="190" cy="11" r="3.500" fill="#2b2b2b" />
      <circle cx="188" cy="10" r="1.500" fill="#555" />
    </svg>
  );
}

function Phone({ children, className = "" }) {
  const key = "absolute w-[4px] bg-gradient-to-b from-[#111] via-[#444] to-[#111]";
  const band = "absolute h-[7px] w-[8px] bg-[#4c4c4c]";
  return (
    <section className={`relative w-full max-w-[519px] ${className}`}>
      <div className={`${key} -left-[3px] top-[142px] h-[38px] rounded-l-[2px]`} />
      <div className={`${key} -left-[3px] top-[217px] h-[75px] rounded-l-[2px]`} />
      <div className={`${key} -left-[3px] top-[313px] h-[75px] rounded-l-[2px]`} />
      <div className={`${key} -right-[3px] top-[243px] h-[120px] rounded-r-[2px]`} />
      <div className="rounded-[84px] bg-black px-[31px] py-[30px] shadow-[14px_14px_22px_rgba(0,0,0,0.38),inset_0_0_0_1px_#111,inset_0_0_0_2px_#303030,inset_0_0_0_4px_#585858,inset_0_0_0_6px_#6b6b6b,inset_0_0_0_7px_#363636,inset_0_0_0_10px_#0a0a0a,inset_0_0_0_11px_#262626,inset_0_0_0_13px_#3c3c3c,inset_0_0_0_15px_#4c4c4c,inset_0_0_0_17px_#3c3c3c,inset_0_0_0_19px_#282828,inset_0_0_0_21px_#121212]">
        <div className="relative flex aspect-[457/990] w-full flex-col overflow-hidden rounded-[52px] bg-white">
          <Notch />
          {children}
        </div>
      </div>
      <div className={`${band} left-0 top-[100px]`} />
      <div className={`${band} right-0 top-[100px]`} />
      <div className={`${band} left-0 bottom-[100px]`} />
      <div className={`${band} right-0 bottom-[100px]`} />
    </section>
  );
}

/* ---------- screens ---------- */

function MapScreen({ id, children }) {
  return (
    <>
      <StatusBar />
      <div className="shrink-0 border-b border-[#dcdcdc] pt-2 pb-[18px]">
        <SearchField />
      </div>
      <div className="min-h-0 flex-1">
        <CityMap id={id} />
      </div>
      <BottomNav />
      {children}
    </>
  );
}

function WelcomeDialog() {
  return (
    <div className="absolute inset-0 z-20 bg-black/10 pt-[281px] pr-[18px] pl-5">
      <div role="dialog" aria-label="Rutas" className="relative flex flex-col items-center rounded-[10px] bg-white px-[19px] pt-[50px] pb-[45px] shadow-[0_6px_50px_rgba(0,0,0,0.22)]">
        <button type="button" aria-label="Cerrar" className="absolute top-[19px] right-[19px] text-[#b3b3b3]">
          <CloseIcon className="h-[21px] w-[21px]" />
        </button>
        <FlussoLogo />
        <h2 className="mt-3 text-[13px] leading-5 font-medium tracking-wider text-[#aab0b7]">¿QUÉ ES... RUTAS?</h2>
        <p className="mt-[23px] mb-[29px] text-center text-[15px] leading-6 whitespace-nowrap text-[#111]">
          En rutas se te proponen rutas más saludables, que
          <br />
          conllevan menos riesgos para tu salud, para llegar
          <br />a tu destino. ¡Así evitaras el empeoramiento de tus
          <br />
          problemas alérgicos!
        </p>
        <PrimaryButton>Empezar ahora</PrimaryButton>
      </div>
    </div>
  );
}

const PLACES = [
  { icon: "home", name: "Casa", action: "ESTABLECER UNA VEZ E IR" },
  { icon: "work", name: "Trabajo", action: "ESTABLECER UNA VEZ E IR" },
  { icon: "star", name: "Favoritos", action: "DEFINIR EL PRIMER FAVORITO" },
];

function Key({ children }) {
  return (
    <button type="button" className="h-[52px] w-[39px] shrink-0 rounded-[6px] bg-[#fdfdfe] text-[26px] leading-8 text-black shadow-[0_1px_0_#8a8d92]">
      {children}
    </button>
  );
}

function Keyboard() {
  const dark = "flex h-[52px] items-center justify-center rounded-[6px] bg-[#adb4be] text-[19px] text-black shadow-[0_1px_0_#8a8d92]";
  return (
    <div className="shrink-0 bg-[#d1d5da] pt-[10px]">
      <div className="flex flex-col gap-[14px] pr-[1px] pl-[5px]">
        <div className="flex justify-between">
          {[..."QWERTYUIOP"].map((k) => <Key key={k}>{k}</Key>)}
        </div>
        <div className="flex justify-between px-[23px]">
          {[..."ASDFGHJKL"].map((k) => <Key key={k}>{k}</Key>)}
        </div>
        <div className="flex justify-between gap-4">
          <button type="button" aria-label="Mayúsculas" className="flex h-[52px] w-[51px] shrink-0 items-center justify-center rounded-[6px] bg-[#fdfdfe] shadow-[0_1px_0_#8a8d92]">
            <svg viewBox="0 0 24 21" className="h-[21px] w-6"><path d="M12 0L24 12H18V19Q18 21 16 21H8Q6 21 6 19V12H0z" /></svg>
          </button>
          <div className="flex flex-1 justify-between">
            {[..."ZXCVBNM"].map((k) => <Key key={k}>{k}</Key>)}
          </div>
          <button type="button" aria-label="Borrar" className="flex h-[52px] w-[51px] shrink-0 items-center justify-center rounded-[6px] bg-[#adb4be] shadow-[0_1px_0_#8a8d92]">
            <svg viewBox="0 0 29 22" className="h-[22px] w-[29px]" fill="none" stroke="#111" strokeWidth="1.600" strokeLinejoin="round" strokeLinecap="round">
              <path d="M9 1.500H24q4 0 4 4V16.500q0 4-4 4H9Q7.500 20.500 6.500 19.500L1 12.500q-1-1.500 0-3L6.500 2.500Q7.500 1.500 9 1.500zM13.500 7.500l7 7M20.500 7.500l-7 7" />
            </svg>
          </button>
        </div>
        <div className="grid grid-cols-[106fr_222fr_107fr] gap-2">
          <button type="button" className={dark}>123</button>
          <button type="button" className="h-[52px] rounded-[6px] bg-[#fdfdfe] text-[19px] text-black shadow-[0_1px_0_#8a8d92]">space</button>
          <button type="button" className={dark}>Go</button>
        </div>
      </div>
      <div className="mt-8 mb-[14px] flex h-[34px] items-center justify-between pr-[33px] pl-[31px]">
        <button type="button" aria-label="Emoji">
          <svg viewBox="0 0 94 94" className="h-[34px] w-[34px]" fill="none" stroke="#50555d" strokeWidth="4">
            <circle cx="47" cy="47" r="44" />
            <circle cx="33" cy="32" r="6" fill="#50555d" stroke="none" />
            <circle cx="61" cy="32" r="6" fill="#50555d" stroke="none" />
            <path d="M18 52Q47 62 76 52Q74 76 47 77Q20 76 18 52z" />
            <path d="M24 66Q47 74 70 66Q62 77 47 77Q32 77 24 66z" fill="#50555d" />
          </svg>
        </button>
        <button type="button" aria-label="Dictado">
          <svg viewBox="0 0 54 88" className="h-[32px] w-[20px]" fill="none" stroke="#50555d" strokeWidth="4.500" strokeLinecap="round">
            <rect x="15" y="3" width="24" height="56" rx="12" />
            <path d="M3 38V48Q4 70 27 71Q50 70 51 48V38M27 71V84M12 85H42" />
          </svg>
        </button>
      </div>
      <HomeBar />
    </div>
  );
}

function SearchScreen() {
  return (
    <>
      <StatusBar />
      <header className="grid h-[53px] shrink-0 grid-cols-3 items-center border-b border-[#dcdcdc] px-[14px] pb-[2px]">
        <a href="#" className="flex items-center gap-[6px] text-[19px] leading-6 text-[#1398bf]">
          <BackChevron />
          Mapa
        </a>
        <h1 className="text-center text-[20px] leading-6 font-semibold text-black">Ruta</h1>
        <span className="justify-self-end"><RingIcon blue /></span>
      </header>
      <div className="shrink-0 space-y-7 pt-5 pb-5">
        <SearchField />
        <ModeTabs />
      </div>
      <ul className="shrink-0 border-t border-[#ececec]">
        {PLACES.map((p) => (
          <li key={p.name} className="border-b border-[#ececec]">
            <a href="#" className="flex h-[79px] items-center gap-[11px] px-5">
              <RowIcon kind={p.icon} />
              <span className="flex flex-1 flex-col">
                <span className="text-base leading-6 font-medium text-[#a6abb1]">{p.name}</span>
                <span className="text-[13px] leading-6 font-medium tracking-wider text-[#1398bf]">{p.action}</span>
              </span>
              <svg viewBox="0 0 11 20" className="h-5 w-[11px]" fill="none" stroke="#a8a8a8" strokeWidth="1.500"><path d="M1 1l9 9l-9 9" /></svg>
            </a>
          </li>
        ))}
      </ul>
      <div className="flex-1" />
      <Keyboard />
    </>
  );
}

const ROUTES = [
  { name: "Ruta más sana", time: "20 min", pollen: "22%", pollenBar: 27, pollution: "45%", pollutionBar: 45, selected: true },
  { name: "Ruta más rápida", time: "12 min", pollen: "85%", pollenBar: 77, pollution: "72%", pollutionBar: 63 },
];

function Metric({ value, bar, label }) {
  return (
    <div className="w-[156px]">
      <div className="text-[20px] leading-6 text-[#111]">{value}</div>
      <div className="mt-[13px] h-[5px] overflow-hidden rounded-full bg-[#ececee]">
        <div className="h-full rounded-full bg-[#0098bf]" style={{ width: `${bar}%` }} />
      </div>
      <div className="mt-[11px] px-2 text-center text-base leading-6 text-[#999fa6]">
        {label[0]}
        <br />
        {label[1]}
      </div>
    </div>
  );
}

function RouteCard({ route }) {
  return (
    <article
      className={
        route.selected
          ? "rounded-[10px] bg-white px-[18px] pt-[18px] pb-[18px] ring-2 ring-[#0085a8]"
          : "rounded-[10px] bg-white px-[18px] pt-[18px] pb-5 shadow-[0_6px_24px_rgba(0,0,0,0.12)]"
      }
    >
      <div className="flex h-7 items-center justify-between">
        <h3 className="flex items-center gap-[10px] text-[19px] leading-7 font-medium text-[#a3a9af]">
          <span className="h-[5px] w-[5px] rounded-full bg-[#0098bf]" />
          {route.name}
        </h3>
        <span className="text-[27px] leading-7 font-medium text-black">{route.time}</span>
      </div>
      <div className="mt-[33px] flex justify-between">
        <Metric value={route.pollen} bar={route.pollenBar} label={["Concentración de", "polen"]} />
        <Metric value={route.pollution} bar={route.pollutionBar} label={["Nivel de", "contaminación"]} />
      </div>
    </article>
  );
}

function RoutesScreen() {
  return (
    <>
      <div className="h-[247px] shrink-0"><OverviewMap /></div>
      <div className="flex min-h-0 flex-1 flex-col pt-[10px]">
        <div className="mx-auto h-[5px] w-[58px] shrink-0 rounded-full bg-[#d2d2d2]" />
        <div className="mt-1 mb-7 grid h-[26px] grid-cols-[1fr_auto_1fr] items-center pr-[18px] pl-[11px] text-[#5fadc8]">
          <button type="button" aria-label="Atrás" className="justify-self-start"><BackChevron /></button>
          <h2 className="pl-[7px] text-[13px] leading-5 font-medium tracking-wider text-[#a3a9af]">SALIENDO AHORA</h2>
          <button type="button" aria-label="Cerrar" className="justify-self-end"><CloseIcon className="h-6 w-6" /></button>
        </div>
        <ModeTabs />
        <div className="mx-5 mt-[21px] flex flex-col gap-[21px]">
          {ROUTES.map((r) => <RouteCard key={r.name} route={r} />)}
        </div>
        <div className="mt-5 px-[38px]"><PrimaryButton>Seleccionar</PrimaryButton></div>
      </div>
      <BottomNav />
    </>
  );
}

function NavigationScreen() {
  return (
    <>
      <StatusBar />
      <header className="grid h-[112px] shrink-0 grid-cols-[1fr_auto_1fr] items-start pt-[13px] pr-[18px] pl-[12px] text-[#1398bf]">
        <button type="button" aria-label="Atrás" className="justify-self-start"><BackChevron /></button>
        <div className="pl-[6px] text-center">
          <h1 className="text-[19px] leading-6 font-medium">Gira a la derecha</h1>
          <p className="text-base leading-5 text-[#b0b6bc]">a 600 metros</p>
          <p className="mt-[6px] text-[19px] leading-6 font-medium text-[#111]">4 min</p>
        </div>
        <button type="button" aria-label="Cerrar" className="justify-self-end"><CloseIcon className="h-[25px] w-[25px]" /></button>
      </header>
      <div className="min-h-0 flex-1"><TurnMap /></div>
      <div className="relative flex h-[210px] shrink-0 flex-col items-center px-[38px] pt-[29px]">
        <svg viewBox="0 0 86 108" className="absolute -top-5 left-1/2 h-[39px] w-[31px] -translate-x-1/2">
          <path d="M43 106C33 86 1 76 1 42A42 42 0 0 1 85 42C85 76 53 86 43 106z" fill="#0098bf" />
          <circle cx="43" cy="43" r="32" fill="#fff" />
        </svg>
        <p className="text-[19px] leading-6 font-medium text-[#0098bf]">Paseo de la Chopera, 14</p>
        <p className="text-[15px] leading-[22px] text-[#b0b6bc]">Madrid, España</p>
        <p className="mt-1 mb-5 text-[27px] leading-8 font-medium text-black">20 min</p>
        <PrimaryButton>Finalizar</PrimaryButton>
      </div>
      <BottomNav />
    </>
  );
}

export default function App() {
  return (
    <main className="min-h-screen overflow-hidden bg-white pt-24 pb-[104px] font-['Inter','Liberation_Sans',sans-serif]">
      <div className="grid grid-cols-[repeat(4,minmax(0,519px))] items-start justify-between gap-6 pr-[137px] pl-[129px]">
        <Phone className="mt-3">
          <MapScreen id="welcome">
            <WelcomeDialog />
          </MapScreen>
        </Phone>
        <Phone className="mt-3">
          <MapScreen id="explore" />
        </Phone>
        <Phone>
          <SearchScreen />
        </Phone>
        <Phone>
          <RoutesScreen />
        </Phone>
      </div>
      <div className="mt-[154px] flex justify-center">
        <Phone>
          <NavigationScreen />
        </Phone>
      </div>
    </main>
  );
}
